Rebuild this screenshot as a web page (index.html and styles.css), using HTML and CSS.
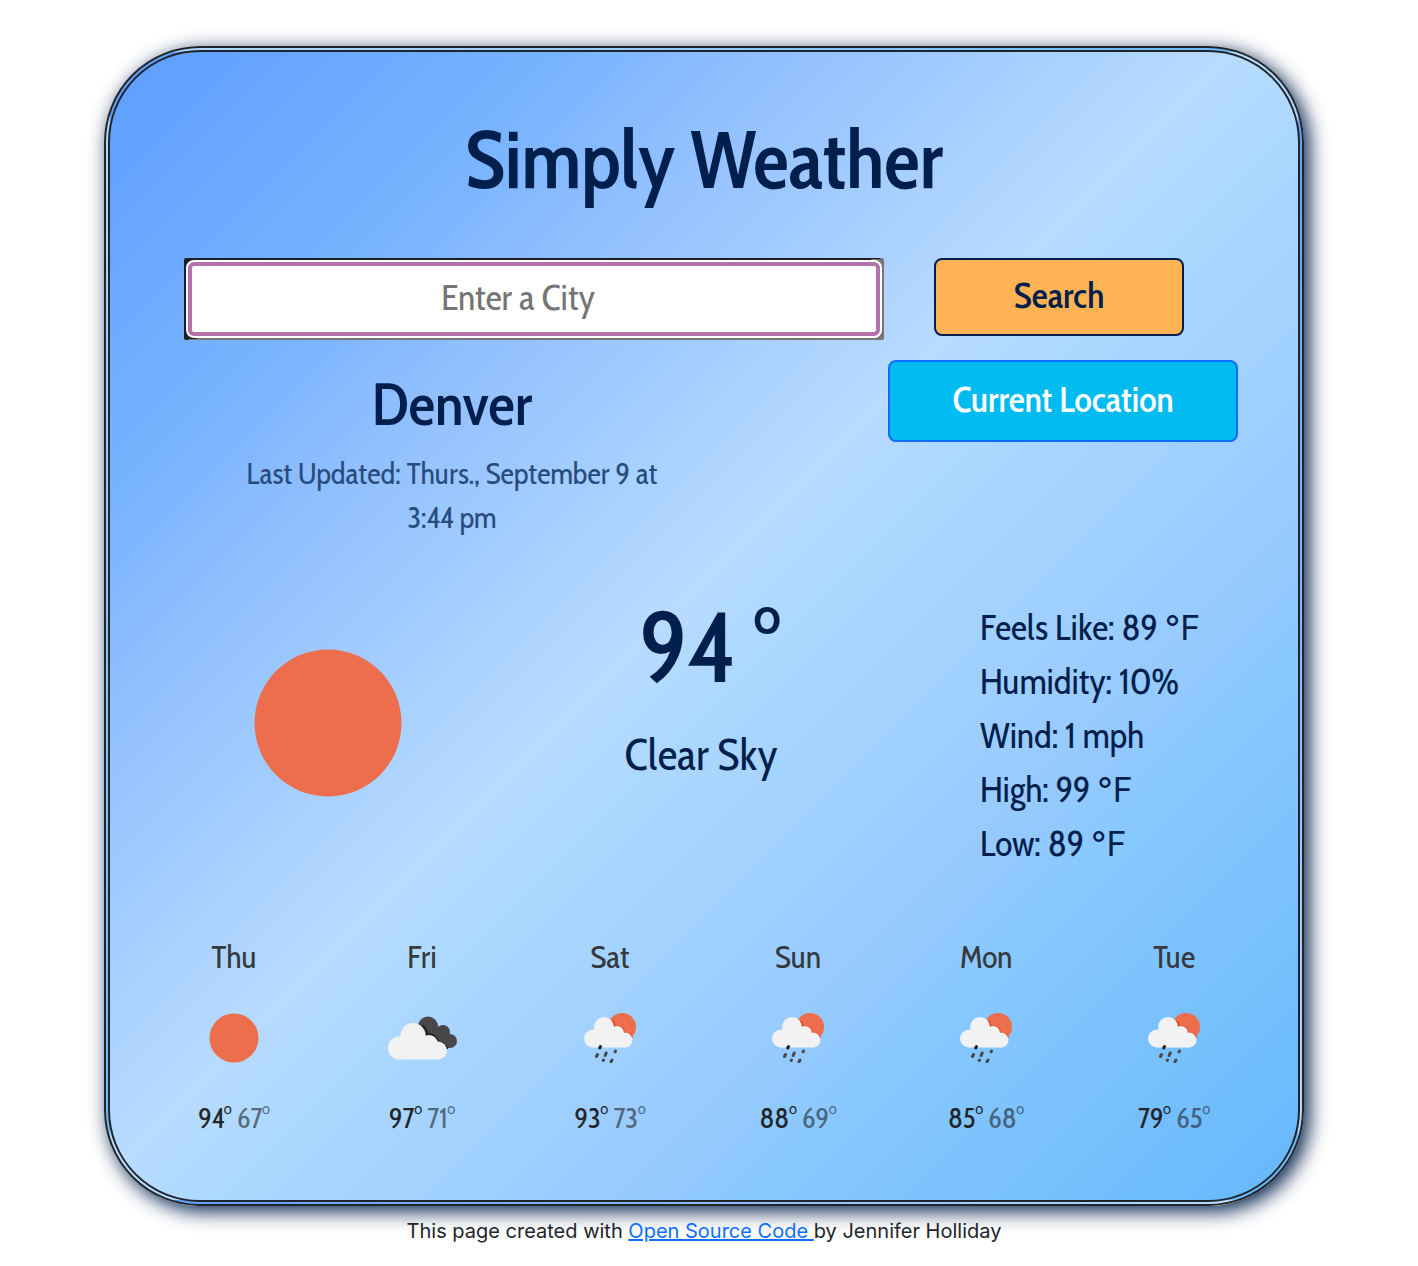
FILE: index.html
```html
<!DOCTYPE html>
<html lang="en">
<head>
<meta charset="utf-8">
<title>Simply Weather</title>
<meta name="viewport" content="width=device-width, initial-scale=1">
<link rel="stylesheet" href="styles.css">
</head>
<body>
<svg class="sprite" aria-hidden="true">
  <symbol id="sun" viewBox="0 0 50 50">
    <circle cx="25" cy="25" r="24.5" fill="#ec6e4c"/>
  </symbol>
  <symbol id="clouds" viewBox="0 0 70 50">
    <g fill="#48484a">
      <circle cx="41" cy="13.500" r="10"/><circle cx="56" cy="19" r="7"/><circle cx="63" cy="28" r="7"/>
      <path d="M37 11h12l10 10 4 14H49z"/>
    </g>
    <path d="M35 12Q40 16 40 21Q48 20 51.500 29Q58 30 60.500 36" fill="none" stroke="#222" stroke-width="2"/>
    <g fill="#f2f2f2">
      <circle cx="26" cy="22.500" r="12.500"/><circle cx="42" cy="31" r="9"/><circle cx="12.500" cy="35" r="11.500"/><circle cx="51" cy="37.500" r="9"/>
      <path d="M12 23h31l8 10v13.500H12z"/>
    </g>
  </symbol>
  <symbol id="rain" viewBox="0 0 52 50">
    <circle cx="38" cy="14" r="14" fill="#ec6e4c"/>
    <path d="M28 8Q31 10 30 14Q39 12 40 20Q46 20 48 25" fill="none" stroke="#e8401c" stroke-width="2"/>
    <g fill="#f2f2f2">
      <circle cx="20" cy="14" r="10"/><circle cx="33" cy="20" r="7"/><circle cx="9" cy="25.500" r="9"/><circle cx="41" cy="27" r="7.500"/>
      <path d="M9 17h24l8 8v9.500H9z"/>
    </g>
    <g stroke="#48484a" stroke-width="3" stroke-linecap="round">
      <path stroke="#222" d="M16.500 33.500l-.8 1.500"/><path d="M13.500 41.500l-1 2M22.200 40l-1 2.500M31.500 38l-.4.800M19.500 47l-.3.500M28 47l-1 1.800"/>
    </g>
  </symbol>
</svg>
<main class="card">
  <h1 class="title">Simply Weather</h1>
  <form class="search">
    <div class="field"><input class="city-input" type="text" placeholder="Enter a City" aria-label="City"></div>
    <button class="btn btn-search" type="button">Search</button>
  </form>
  <section class="place">
    <div class="place-name">
      <h2 class="city">Denver</h2>
      <p class="updated">Last Updated: Thurs., September 9 at 3:44 pm</p>
    </div>
    <button class="btn btn-location" type="button">Current Location</button>
  </section>
  <section class="current">
    <svg class="current-icon" role="img" aria-label="Clear sky"><use href="#sun"/></svg>
    <div class="now">
      <p class="temp">94 °</p>
      <p class="sky">Clear Sky</p>
    </div>
    <ul class="details">
      <li>Feels Like: 89 <span class="unit">°F</span></li>
      <li>Humidity: 10%</li>
      <li>Wind: 1 mph</li>
      <li>High: 99 <span class="unit">°F</span></li>
      <li>Low: 89 <span class="unit">°F</span></li>
    </ul>
  </section>
  <section class="forecast">
    <div class="day"><h3 class="day-name">Thu</h3><svg class="day-icon sun-icon"><use href="#sun"/></svg><p class="range">94° <span class="low">67°</span></p></div>
    <div class="day"><h3 class="day-name">Fri</h3><svg class="day-icon clouds-icon"><use href="#clouds"/></svg><p class="range">97° <span class="low">71°</span></p></div>
    <div class="day"><h3 class="day-name">Sat</h3><svg class="day-icon rain-icon"><use href="#rain"/></svg><p class="range">93° <span class="low">73°</span></p></div>
    <div class="day"><h3 class="day-name">Sun</h3><svg class="day-icon rain-icon"><use href="#rain"/></svg><p class="range">88° <span class="low">69°</span></p></div>
    <div class="day"><h3 class="day-name">Mon</h3><svg class="day-icon rain-icon"><use href="#rain"/></svg><p class="range">85° <span class="low">68°</span></p></div>
    <div class="day"><h3 class="day-name">Tue</h3><svg class="day-icon rain-icon"><use href="#rain"/></svg><p class="range">79° <span class="low">65°</span></p></div>
  </section>
</main>
<footer class="credit">This page created with <a href="#source">Open Source Code </a>by Jennifer Holliday</footer>
</body>
</html>
```
FILE: styles.css
```css
* { box-sizing: border-box; }
body {
  margin: 0;
  padding: 46px 10px 20px 0;
  background: #fff;
  color: #212529;
  font-family: "Cabin Condensed", Lato, sans-serif;
}
h1, h2, h3, p, ul { margin: 0; padding: 0; }
.sprite { display: none; }
.card {
  max-width: 1200px;
  margin: 0 auto;
  padding: 60px 30px 62px;
  border: 6px double #212529;
  border-radius: 96px;
  background-image: linear-gradient(135deg, #5c9dff 0%, #7bb5ff 21%, #8cbcff 26%, #b8dbff 48%, #acd8ff 54%, #97caff 71%, #88c8ff 77%, #66b8fb 100%);
  box-shadow: 5px 5px 20px #001f4c;
  color: #001f4c;
}
.title { font-size: 80px; line-height: 96px; font-weight: 600; text-align: center; }
.search { display: flex; align-items: flex-start; gap: 50px; padding: 50px 84px 0 44px; }
.field {
  flex: 1;
  padding: 2px;
  border-radius: 2px;
  background: linear-gradient(to top left, #767676 50%, #1d1f22 50%);
}
.city-input {
  display: block;
  width: 100%;
  height: 78px;
  padding: 0 40px 4px 8px;
  border: 0;
  border-radius: 8px;
  outline: 4px solid #b472ad;
  outline-offset: -6px;
  background: #fff;
  font: 36px/44px "Cabin Condensed", Lato, sans-serif;
  text-align: center;
}
.city-input::placeholder { color: #757575; opacity: 1; }
.btn { padding-bottom: 6px; border: 2px solid; border-radius: 8px; font: 500 36px/44px "Cabin Condensed", Lato, sans-serif; }
.btn-search { width: 250px; height: 78px; border-color: #001f4c; background: #ffb354; color: #001f4c; }
.place { display: flex; justify-content: space-between; align-items: flex-start; padding: 20px 30px 0 102px; }
.place-name { width: 420px; padding-top: 8px; text-align: center; }
.city { margin-bottom: 12px; font-size: 60px; line-height: 72px; font-weight: 500; }
.updated { font-size: 30px; line-height: 44px; color: #274d80; }
.btn-location { width: 350px; height: 82px; border-color: #0d6efd; background: #00bbf0; color: #fff; }
.current { display: grid; grid-template-columns: repeat(3, 1fr); padding-top: 60px; }
.current-icon { width: 150px; height: 150px; margin: 48px auto 0; }
.now { text-align: center; }
.temp { margin-bottom: 36px; padding-left: 12px; font-size: 100px; line-height: 92px; font-weight: 500; }
.sky { font-size: 44px; line-height: 54px; padding-right: 6px; }
.details { padding-left: 88px; list-style: none; font-size: 36px; line-height: 54px; }
.unit { font-family: Inter, sans-serif; font-size: 34px; line-height: 34px; }
.forecast { display: grid; grid-template-columns: repeat(6, 1fr); padding-top: 68px; color: #212529; text-align: center; }
.day { display: flex; flex-direction: column; align-items: center; }
.day-name { font-size: 32px; line-height: 38px; font-weight: 400; color: #343a40; }
.day-icon { height: 50px; margin: 37px 0 35px; }
.sun-icon { width: 50px; }
.clouds-icon { width: 70px; }
.rain-icon { width: 52px; }
.range { font-size: 28px; line-height: 40px; }
.low { opacity: .6; }
.credit { padding-top: 10px; font: 20px/30px Inter, sans-serif; text-align: center; }
.credit a { color: #0d6efd; }
```
